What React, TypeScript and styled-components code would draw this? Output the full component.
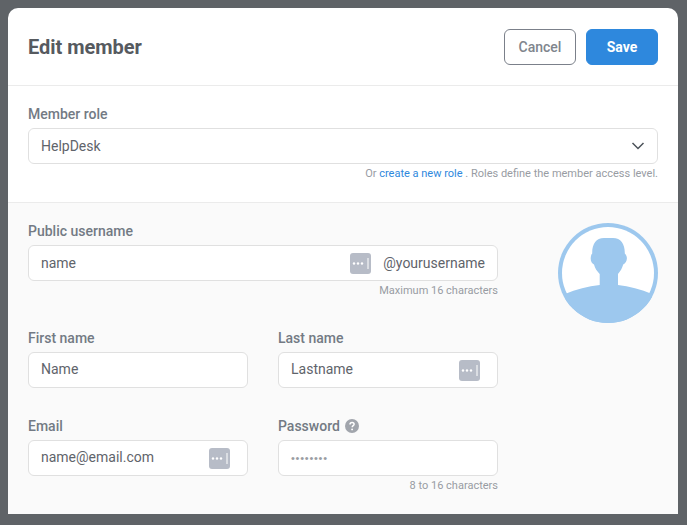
import React from "react";
import styled, { createGlobalStyle } from "styled-components";

const Global = createGlobalStyle`
  html, body { margin: 0; padding: 0; height: 100%; background: #5f6367; overflow: hidden; }
  body { font-family: Roboto, "Liberation Sans", sans-serif; }
  #root { height: 100%; }
`;
const Page = styled.div`
  width: 687px; height: 525px; box-sizing: border-box; padding: 8px 9px 11px 8px;
`;
const Modal = styled.div`
  height: 506px; background: #fff; border-radius: 10px 10px 0 0; overflow: hidden;
  display: flex; flex-direction: column;
`;
const Header = styled.header`
  box-sizing: border-box; padding: 0 20px; display: flex; align-items: center;
  justify-content: space-between; border-bottom: 1px solid #ebebeb; flex: none; height: 78px;
`;
const Title = styled.h1`
  margin: 0; font-size: 20px; font-weight: 700; color: #565a5f; line-height: 24px; letter-spacing: -0.03px;
`;
const Actions = styled.div`display: flex; gap: 10px;`;
const Button = styled.button<{ $primary?: boolean }>`
  width: 72px; height: 36px; box-sizing: border-box; border-radius: 6px; font-family: inherit;
  font-size: 14px; padding: 0; font-weight: ${p => (p.$primary ? 700 : 500)};
  color: ${p => (p.$primary ? "#fff" : "#80858d")};
  background: ${p => (p.$primary ? "#2e88dd" : "#fff")};
  border: 1px solid ${p => (p.$primary ? "#2e88dd" : "#7b808a")};
`;
const RoleSection = styled.section`
  flex: none; height: 117px; box-sizing: border-box; padding: 20px 20px 0;
  border-bottom: 1px solid #ebebeb;
`;
const Body = styled.section`
  flex: 1; background: #fafafa; padding: 20px 20px 0; display: flex; justify-content: space-between;
`;
const Form = styled.div`
  width: 470px; display: flex; flex-direction: column;
`;
const Row = styled.div<{ $mt?: number }>`
  display: grid; grid-template-columns: 220px 220px; gap: 30px; margin-top: ${p => p.$mt ?? 0}px;
`;
const Field = styled.div`
  display: flex; flex-direction: column; min-width: 0;
`;
const Label = styled.label`
  font-size: 14px; font-weight: 500; line-height: 16px; height: 16px; margin-bottom: 6px; color: #737a84;
  display: flex; align-items: center; gap: 5px;
`;
const InputBox = styled.div`
  height: 36px; box-sizing: border-box; background: #fff; border: 1px solid #e0e0e0; border-radius: 6px;
  display: flex; align-items: center; padding: 0 12px; font-size: 14px; color: #5f646b;
`;
const Value = styled.span<{ $lift?: boolean }>`
  flex: 1; white-space: nowrap; padding-bottom: ${p => (p.$lift ? 2 : 0)}px;
`;
const Suffix = styled.span`margin-left: 12px; color: #5f646b;`;
const Hint = styled.div`
  text-align: right; font-size: 11px; line-height: 13px; color: #989ca3; margin-top: 3px;
`;
const RoleLink = styled.a`color: #2e88dd; text-decoration: none;`;
const KeyBadge = styled.svg<{ $inset?: number }>`
  width: 21px; height: 21px; flex: none; display: block; margin-right: ${p => p.$inset ?? -1}px;
`;
const Dots = styled.span`
  font-family: "Liberation Sans", sans-serif; color: #9a9da3; font-size: 11px; letter-spacing: 0.75px;
`;
const Avatar = styled.svg`width: 100px; height: 100px; display: block; flex: none;`;
const Help = styled.svg`width: 14px; height: 14px; display: block;`;
const Chevron = styled.svg`width: 14px; height: 8px; display: block;`;

const Key = ({ inset }: { inset?: number }) => (
  <KeyBadge viewBox="0 0 21 21" $inset={inset}>
    <rect width="21" height="21" rx="3" fill="#b7bcc7" />
    <circle cx="4" cy="10.5" r="1.2" fill="#fff" />
    <circle cx="8" cy="10.5" r="1.2" fill="#fff" />
    <circle cx="12" cy="10.5" r="1.2" fill="#fff" />
    <rect x="17.5" y="5" width="1" height="11" fill="#fff" />
  </KeyBadge>
);

export default function App() {
  return (
    <Page>
      <Global />
      <Modal>
        <Header>
          <Title>Edit member</Title>
          <Actions>
            <Button>Cancel</Button>
            <Button $primary>Save</Button>
          </Actions>
        </Header>
        <RoleSection>
          <Label>Member role</Label>
          <InputBox>
            <Value>HelpDesk</Value>
            <Chevron viewBox="0 0 14 8">
              <path d="M1.5 1l5.5 5.5L12.5 1" fill="none" stroke="#4c5259" strokeWidth="1.5" />
            </Chevron>
          </InputBox>
          <Hint>
            Or <RoleLink>create a new role</RoleLink> . Roles define the member access level.
          </Hint>
        </RoleSection>
        <Body>
          <Form>
            <Field>
              <Label>Public username</Label>
              <InputBox>
                <Value>name</Value>
                <Key inset={0} />
                <Suffix>@yourusername</Suffix>
              </InputBox>
              <Hint>Maximum 16 characters</Hint>
            </Field>
            <Row $mt={33}>
              <Field>
                <Label>First name</Label>
                <InputBox><Value $lift>Name</Value></InputBox>
              </Field>
              <Field>
                <Label>Last name</Label>
                <InputBox><Value $lift>Lastname</Value><Key inset={5} /></InputBox>
              </Field>
            </Row>
            <Row $mt={30}>
              <Field>
                <Label>Email</Label>
                <InputBox><Value $lift>name@email.com</Value><Key inset={5} /></InputBox>
              </Field>
              <Field>
                <Label>
                  Password
                  <Help viewBox="0 0 14 14">
                    <circle cx="7" cy="7" r="7" fill="#a1a5ac" />
                    <path d="M5 5.4c0-1.3 1-2 2.1-2s2 .7 2 1.8c0 1.5-1.9 1.5-1.9 3" fill="none" stroke="#fff" strokeWidth="1.5" />
                    <circle cx="7.1" cy="10.4" r="0.95" fill="#fff" />
                  </Help>
                </Label>
                <InputBox><Value $lift><Dots>••••••••</Dots></Value></InputBox>
                <Hint>8 to 16 characters</Hint>
              </Field>
            </Row>
          </Form>
          <Avatar viewBox="0 0 100 100">
            <defs>
              <clipPath id="avatar-clip"><circle cx="50" cy="50" r="50" /></clipPath>
            </defs>
            <circle cx="50" cy="50" r="50" fill="#9dc8ee" />
            <circle cx="50" cy="50" r="46" fill="#fff" />
            <g clipPath="url(#avatar-clip)">
              <path d="M7 71C18 66 30 63.5 41.7 62V51C39 48 37 45.5 36 41.5C33.8 40.5 32.5 38 32.7 35C32.8 33 33.2 31.5 34.2 30.5C34 21 38 15 46 15H55C63 15 67 21 66.8 30.5C67.8 31.5 68.8 33 68.9 35C69 38 67.4 40.5 65.2 41.5C64 45.5 62.5 48 60 51V62C71 63.5 83 66 94 71V100H7Z" fill="#9dc8ee" />
            </g>
          </Avatar>
        </Body>
      </Modal>
    </Page>
  );
}
